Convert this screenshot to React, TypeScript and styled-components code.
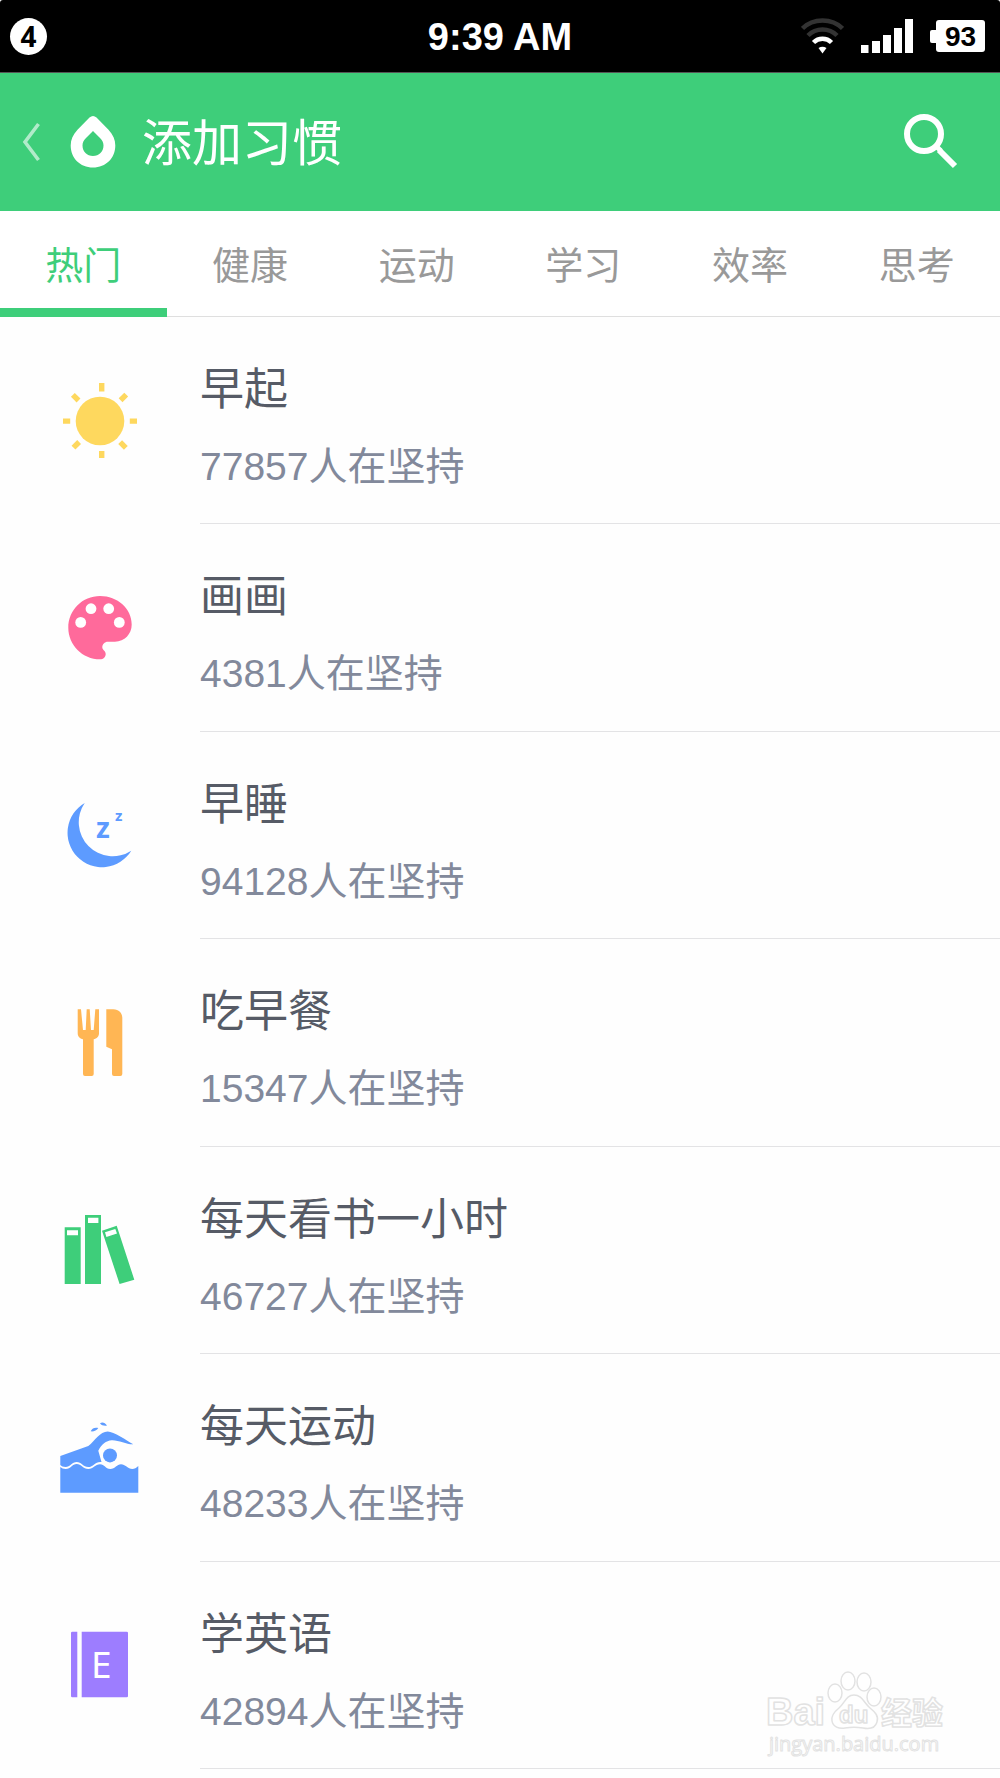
import React, { useState } from "react";
import styled, { createGlobalStyle } from "styled-components";

const GREEN = "#3ece7a";
const SANS = `"Liberation Sans", "Noto Sans CJK SC", sans-serif`;

const GlobalStyle = createGlobalStyle`
  *, *::before, *::after { box-sizing: border-box; }
  body { margin: 0; background: #fefefe; font-family: ${SANS}; }
  button { border: 0; padding: 0; background: none; font: inherit; color: inherit; cursor: pointer; }
  svg { display: block; }
`;

const Page = styled.div`
  position: relative;
  display: flex;
  flex-direction: column;
  background: #fefefe;
`;

const StatusBar = styled.div`
  display: grid;
  grid-template-columns: 1fr auto 1fr;
  align-items: center;
  height: 73px;
  padding: 0 10px;
  border-bottom: 1px solid #555;
  border-radius: 3px 3px 0 0;
  background: #000;
  color: #fff;
`;

const Notifications = styled.span`
  display: grid;
  place-items: center;
  width: 37px;
  height: 37px;
  border-radius: 50%;
  background: #fff;
  color: #000;
  font: 700 28px/37px "Noto Sans", sans-serif;
`;

const Clock = styled.time`
  padding-top: 2px;
  font-size: 38px;
  line-height: 44px;
  font-weight: 700;
`;

const StatusIcons = styled.div`
  display: flex;
  align-items: center;
  justify-content: flex-end;
  gap: 17px;
  padding-right: 5px;
`;

const Battery = styled.span`
  display: flex;
  align-items: center;

  &::before {
    content: "";
    width: 6px;
    height: 13px;
    border-radius: 2px 0 0 2px;
    background: #fff;
  }
`;

const BatteryLevel = styled.span`
  width: 49px;
  height: 32px;
  border-radius: 3px;
  background: #fff;
  color: #000;
  font-size: 28px;
  font-weight: 700;
  line-height: 33px;
  text-align: center;
`;

const Header = styled.header`
  display: flex;
  align-items: center;
  height: 138px;
  padding: 0 38px 0 20px;
  background: ${GREEN};
  color: #fff;
`;

const BackButton = styled.button`
  display: flex;
  align-items: center;
  gap: 28px;
`;

const Title = styled.h1`
  flex: 1;
  margin: 0 0 0 26px;
  padding-top: 4px;
  font-size: 50px;
  line-height: 72px;
  font-weight: 400;
`;

const Tabs = styled.nav`
  display: grid;
  grid-template-columns: repeat(6, 1fr);
  height: 106px;
  background: #fff;
  box-shadow: inset 0 -1px #dfdfdf;
`;

const Tab = styled.button<{ $active: boolean }>`
  && {
    padding-top: 13px;
    border-bottom: 9px solid ${(p) => (p.$active ? GREEN : "transparent")};
    color: ${(p) => (p.$active ? GREEN : "#999")};
    font-size: 38px;
    line-height: 56px;
  }
`;

const List = styled.ul`
  margin: 0;
  padding: 0;
  list-style: none;
`;

const Row = styled.li`
  display: grid;
  grid-template-columns: 200px 1fr;
  height: 207px;

  &:nth-child(even) { height: 208px; }
`;

const IconCell = styled.div`
  padding: 64px 0 0 60px;
`;

const RowBody = styled.div`
  padding-top: 43px;
  border-bottom: 1px solid #e3e3e5;
`;

const HabitName = styled.h2`
  margin: 0 0 17px;
  color: #565b66;
  font-size: 44px;
  line-height: 60px;
  font-weight: 400;
`;

const HabitCount = styled.p`
  margin: 0;
  color: #82899b;
  font-size: 39px;
  line-height: 60px;
`;

const Watermark = styled.svg`
  position: absolute;
  right: 50px;
  bottom: 6px;
`;

const Sun = () => (
  <g fill="#fed85e">
    <circle cx="40" cy="40" r="24.3" />
    <path d="M39 2h5.4v8.5H39zM39 70h5.4v7H39zM3 37.4h7.2v5.4H3zM69.8 37.4H77v5.4h-7.2z" />
    <rect x="-4" y="-2.7" width="8" height="5.4" transform="translate(15.7 16.7) rotate(45)" />
    <rect x="-4" y="-2.7" width="8" height="5.4" transform="translate(63.4 16.4) rotate(-45)" />
    <rect x="-4" y="-2.7" width="8" height="5.4" transform="translate(16.3 63.8) rotate(-45)" />
    <rect x="-4" y="-2.7" width="8" height="5.4" transform="translate(63 64) rotate(45)" />
  </g>
);

const Palette = () => (
  <>
    <path
      fill="#ff6a9b"
      d="M40 71.3C22.5 71.3 8.3 57 8.3 39.7 8.3 22 22.5 8 40 8c17.5 0 31.7 12.5 31.7 28.5 0 9.5-7.2 17.2-16.7 17.2h-7c-3.5 0-5.7 2.6-5.7 5.5 0 2.8 3.4 3.3 3.4 6.8 0 3-2.2 5.3-5.7 5.3z"
    />
    <g fill="#fff">
      <circle cx="20.7" cy="34.4" r="5.4" />
      <circle cx="31" cy="20.7" r="5.4" />
      <circle cx="48.7" cy="20.7" r="5.4" />
      <circle cx="59.3" cy="34.4" r="5.4" />
    </g>
  </>
);

const Moon = () => (
  <g fill="#5d9bff" fontFamily="Noto Sans, sans-serif" fontWeight="700">
    <path d="M24.7 7A34.4 34.4 0 1 0 71.3 54.7 34 34 0 0 1 24.7 7z" />
    <text x="36" y="42" fontSize="28">z</text>
    <text x="55" y="25" fontSize="15">z</text>
  </g>
);

const Cutlery = () => (
  <g fill="#ffb654">
    <path d="M17.7 6.3H21l2 20.7h2.7l1-20.7h3l1.3 20.7h2.7l1.6-20.7H39v24c0 3.4-2.3 5.5-5.3 6V71q0 2-2 2H25q-2 0-2-2V36.3c-3-.5-5.3-2.600-5.300-6z" />
    <path d="M46.300 6.300h7c5.500 0 9 3.500 9 8.700v56q0 2-2 2H54q-2 0-2-2V46.300l-5.700-2.600z" />
  </g>
);

const Books = () => (
  <>
    <path fill={GREEN} d="M4.700 16.300h16V73h-16zM25 4h16v69H25zM42 19.700 56.700 14.700l17.600 54L59.600 73z" />
    <path fill="#fff" d="M7 19.300h11v5H7zM28 6.800h10.400V12H28zM45 21.300l10.300-3.400 1.700 4.500-10.600 3.600z" />
  </>
);

const Swimmer = () => (
  <g fill="#5d9bff">
    <path d="M.3 38 28.300 28C35 22.500 40 13.400 47.700 13.400c6 0 19 8.900 25.600 12.900-6 .5-15-4.400-21.600-4-5.500.3-10.400 4.200-13.400 10.400L41.500 44c-6-1-8 5-13.200 5-5 0-7-5-11.600-5S10 49 5.700 49C3 49 1.500 48 .3 47z" />
    <path d="M.3 49c1.500 1 3 2 5.400 2 5 0 6.500-5 11-5s6.500 5 11.600 5 7-4.700 11.700-4.700 5.300 4.700 10.300 4.700 6.500-4.700 10.700-4.700 7 4.700 11.300 4.700c2.200 0 4-1.200 6-3v26.700h-78z" />
    <circle cx="50" cy="37.400" r="7" />
    <path d="M30.700 13.300c1.500-3.500 4.500-4 7.600-3.300-1.500 2.500-5 3.800-7.600 3.300zM40 5.300c2.500-1.500 5-.5 7 2.300-2.500.5-5.500 0-7-2.300z" />
  </g>
);

const Dictionary = () => (
  <>
    <g fill="#9d7dff">
      <path d="M12.300 5.700h5v65.600h-5Q11 71.300 11 70V7q0-1.300 1.300-1.300z" />
      <path d="M21.700 5.700h45Q68 5.700 68 7v63q0 1.300-1.300 1.300h-45z" />
    </g>
    <text x="31" y="52" fill="#fff" fontFamily="Noto Sans, sans-serif" fontSize="37">E</text>
  </>
);

const tabs = ["热门", "健康", "运动", "学习", "效率", "思考"];

const habits = [
  { name: "早起", count: 77857, Icon: Sun },
  { name: "画画", count: 4381, Icon: Palette },
  { name: "早睡", count: 94128, Icon: Moon },
  { name: "吃早餐", count: 15347, Icon: Cutlery },
  { name: "每天看书一小时", count: 46727, Icon: Books },
  { name: "每天运动", count: 48233, Icon: Swimmer },
  { name: "学英语", count: 42894, Icon: Dictionary },
];

export default function App() {
  const [active, setActive] = useState(tabs[0]);

  return (
    <>
      <GlobalStyle />
      <Page>
        <StatusBar>
          <Notifications>4</Notifications>
          <Clock>9:39 AM</Clock>
          <StatusIcons>
            <svg width="43" height="36" viewBox="0 0 43 36" fill="none" strokeWidth="4.5" aria-hidden="true">
              <path stroke="#333" d="M1.500 10.500C12-.1 31-.1 41.500 10.500M7 17.500c8-8 21-8 29 0" />
              <path stroke="#fff" d="M12.500 24.500c5-5 13-5 18 0" />
              <path fill="#fff" d="M17.500 30q4-2.500 8 0l-4 5.500z" />
            </svg>
            <svg width="52" height="34" viewBox="0 0 52 34" fill="#fff" aria-hidden="true">
              <path d="M0 26h7.500v8H0zM11 22h8v12h-8zM22 16h8v18h-8zM33 9h8v25h-8zM44 0h8v34h-8z" />
            </svg>
            <Battery>
              <BatteryLevel>93</BatteryLevel>
            </Battery>
          </StatusIcons>
        </StatusBar>

        <Header>
          <BackButton aria-label="返回">
            <svg width="22" height="40" viewBox="0 0 22 40" fill="none" stroke="#fff" strokeOpacity=".6" strokeWidth="3.6">
              <path d="M18.500 2 5 20l13.500 18" />
            </svg>
            <svg width="46" height="54" viewBox="0 0 46 54" fill="#fff">
              <path
                fillRule="evenodd"
                d="M19.500 2.600q3.500-3.200 7 0l12 12.200C43 19.500 45.300 25 45.300 30.500 45.300 43 36 52.500 23 52.500S.7 43 .7 30.500C.7 25 3 19.500 7.500 14.800zM23 16l-7 7c-2.300 2.300-3.500 4.600-3.500 7.600C12.500 37 17 41 23 41s10.500-4 10.500-10.400c0-3-1.200-5.300-3.500-7.600z"
              />
            </svg>
          </BackButton>
          <Title>添加习惯</Title>
          <button aria-label="搜索">
            <svg width="60" height="58" viewBox="0 0 60 58" fill="none" stroke="#fff" strokeWidth="6">
              <circle cx="22" cy="21" r="17" />
              <path d="M34 33l5 5" strokeWidth="5" />
              <path d="M37 37l16 16" />
            </svg>
          </button>
        </Header>

        <Tabs>
          {tabs.map((name) => (
            <Tab key={name} $active={name === active} aria-pressed={name === active} onClick={() => setActive(name)}>
              {name}
            </Tab>
          ))}
        </Tabs>

        <List>
          {habits.map(({ name, count, Icon }) => (
            <Row key={name}>
              <IconCell>
                <svg width="80" height="80" viewBox="0 0 80 80" aria-hidden="true">
                  <Icon />
                </svg>
              </IconCell>
              <RowBody>
                <HabitName>{name}</HabitName>
                <HabitCount>{count}人在坚持</HabitCount>
              </RowBody>
            </Row>
          ))}
        </List>

        <Watermark
          width="184"
          height="94"
          viewBox="0 0 184 94"
          fill="#fff"
          stroke="#e2e2e2"
          strokeWidth="1.5"
          strokeLinejoin="round"
          fontFamily="Liberation Sans, Noto Sans CJK SC, sans-serif"
          fontWeight="700"
        >
          <text x="0" y="56" fontSize="38">Bai</text>
          <ellipse cx="69" cy="24" rx="7" ry="9" />
          <ellipse cx="82" cy="12" rx="7" ry="9" />
          <ellipse cx="98" cy="13" rx="7" ry="9" />
          <ellipse cx="108" cy="28" rx="7" ry="9" />
          <path d="M88 26c8 0 10 8 16 13 5 4 9 8 7 14-2 7-9 7-14 6-6-1-12-1-18 0-6 1-12-1-13-7-1-5 2-9 7-13 6-5 7-13 15-13z" />
          <text x="73" y="54" fontSize="24">du</text>
          <text x="115" y="55" fontSize="31">经验</text>
          <text x="3" y="82" fontSize="20" strokeWidth="1" fontWeight="400" fontFamily="Open Sans, sans-serif">
            jingyan.baidu.com
          </text>
        </Watermark>
      </Page>
    </>
  );
}
